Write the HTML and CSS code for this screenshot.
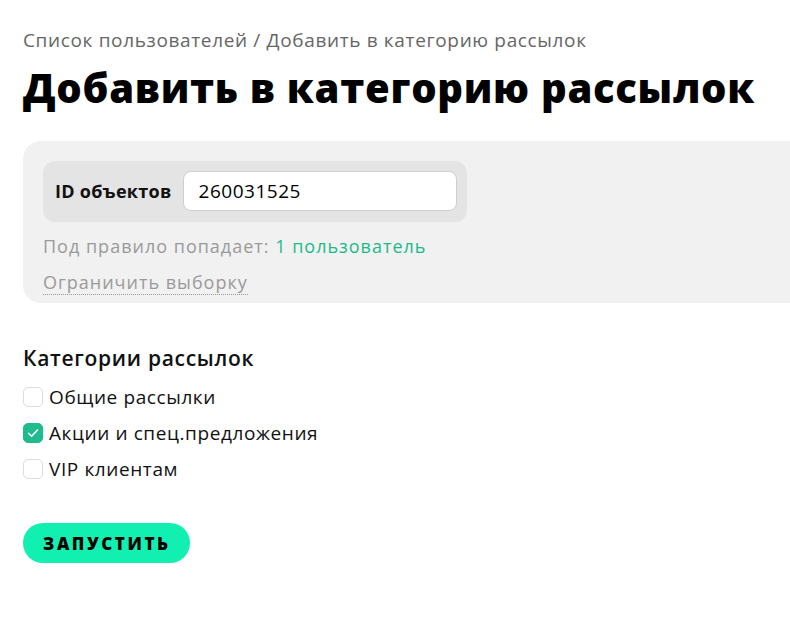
FILE: index.html
```html
<!DOCTYPE html>
<html lang="ru">
<head>
<meta charset="utf-8">
<title>Добавить в категорию рассылок</title>
<link rel="stylesheet" href="styles.css">
</head>
<body>
<div class="page">
  <div class="breadcrumb">Список пользователей / Добавить в категорию рассылок</div>
  <h1 class="title">Добавить в категорию рассылок</h1>

  <div class="card">
    <div class="field-group">
      <label class="field-label" for="ids">ID объектов</label>
      <input class="field-input" id="ids" type="text" value="260031525">
    </div>
    <div class="hint">Под правило попадает: <span class="hint-link">1 пользователь</span></div>
    <div class="limit"><span class="limit-link">Ограничить выборку</span></div>
  </div>

  <h2 class="section-title">Категории рассылок</h2>
  <div class="checks">
    <label class="check"><span class="box"></span><span class="check-text">Общие рассылки</span></label>
    <label class="check"><span class="box box-on"><svg viewBox="0 0 20 20" width="20" height="20"><path d="M5.5 10.3 L8.6 13.3 L14.5 7" fill="none" stroke="#fff" stroke-width="1.6" stroke-linecap="round" stroke-linejoin="round"/></svg></span><span class="check-text">Акции и спец.предложения</span></label>
    <label class="check"><span class="box"></span><span class="check-text">VIP клиентам</span></label>
  </div>

  <button class="run" type="button">Запустить</button>
</div>
</body>
</html>
```

FILE: styles.css
```css
html, body {
  margin: 0;
  padding: 0;
  background: #fff;
}
body {
  font-family: "Open Sans", "Noto Sans", sans-serif;
  color: #111;
}
.page {
  padding: 27px 0 0 23px;
}
.breadcrumb {
  font-size: 19px;
  line-height: 26px;
  letter-spacing: 0.65px;
  color: #666;
}
.title {
  margin: 10px 0 0;
  font-size: 40px;
  line-height: 50px;
  font-weight: 800;
  letter-spacing: 0.7px;
  color: #000;
}
.card {
  margin-top: 28px;
  background: #f1f1f1;
  border-radius: 18px 0 0 18px;
  padding: 20px 20px 9px;
}
.field-group {
  display: inline-flex;
  align-items: center;
  gap: 11px;
  background: #e4e4e4;
  border-radius: 12px;
  padding: 10px 10px 11px 12px;
}
.field-label {
  font-size: 18px;
  font-weight: 700;
  letter-spacing: 0.3px;
  color: #111;
}
.field-input {
  width: 274px;
  height: 40px;
  box-sizing: border-box;
  border: 1px solid #cfcfcf;
  border-radius: 8px;
  background: #fff;
  padding: 0 15px;
  font-family: inherit;
  font-size: 19px;
  letter-spacing: 0.5px;
  color: #000;
  outline: none;
}
.hint {
  margin-top: 12px;
  font-size: 18px;
  line-height: 24px;
  letter-spacing: 1px;
  color: #9a9a9a;
}
.hint-link {
  color: #1db98b;
}
.limit {
  margin-top: 12px;
  font-size: 18px;
  line-height: 24px;
  letter-spacing: 1px;
  color: #9a9a9a;
}
.limit-link {
  border-bottom: 1px dotted #9a9a9a;
}
.section-title {
  margin: 42px 0 0;
  font-size: 21px;
  line-height: 26px;
  font-weight: 600;
  letter-spacing: 0.7px;
  color: #111;
}
.checks {
  margin-top: 16px;
  display: flex;
  flex-direction: column;
  gap: 16px;
}
.check {
  display: flex;
  align-items: center;
  gap: 6px;
  font-size: 19px;
  line-height: 20px;
  letter-spacing: 0.6px;
  color: #111;
}
.box {
  width: 20px;
  height: 20px;
  box-sizing: border-box;
  border: 1px solid #dcdcdc;
  border-radius: 5px;
  background: #fff;
  display: flex;
}
.box-on {
  background: #1fbb8c;
  border-color: #1fbb8c;
}
.box-on svg {
  margin: -1px;
}
.run {
  margin-top: 44px;
  height: 40px;
  padding: 0 19px 0 20px;
  border: none;
  border-radius: 20px;
  background: #12f0b1;
  font-family: inherit;
  font-size: 17px;
  font-weight: 800;
  letter-spacing: 2.6px;
  text-transform: uppercase;
  color: #000;
}
```
